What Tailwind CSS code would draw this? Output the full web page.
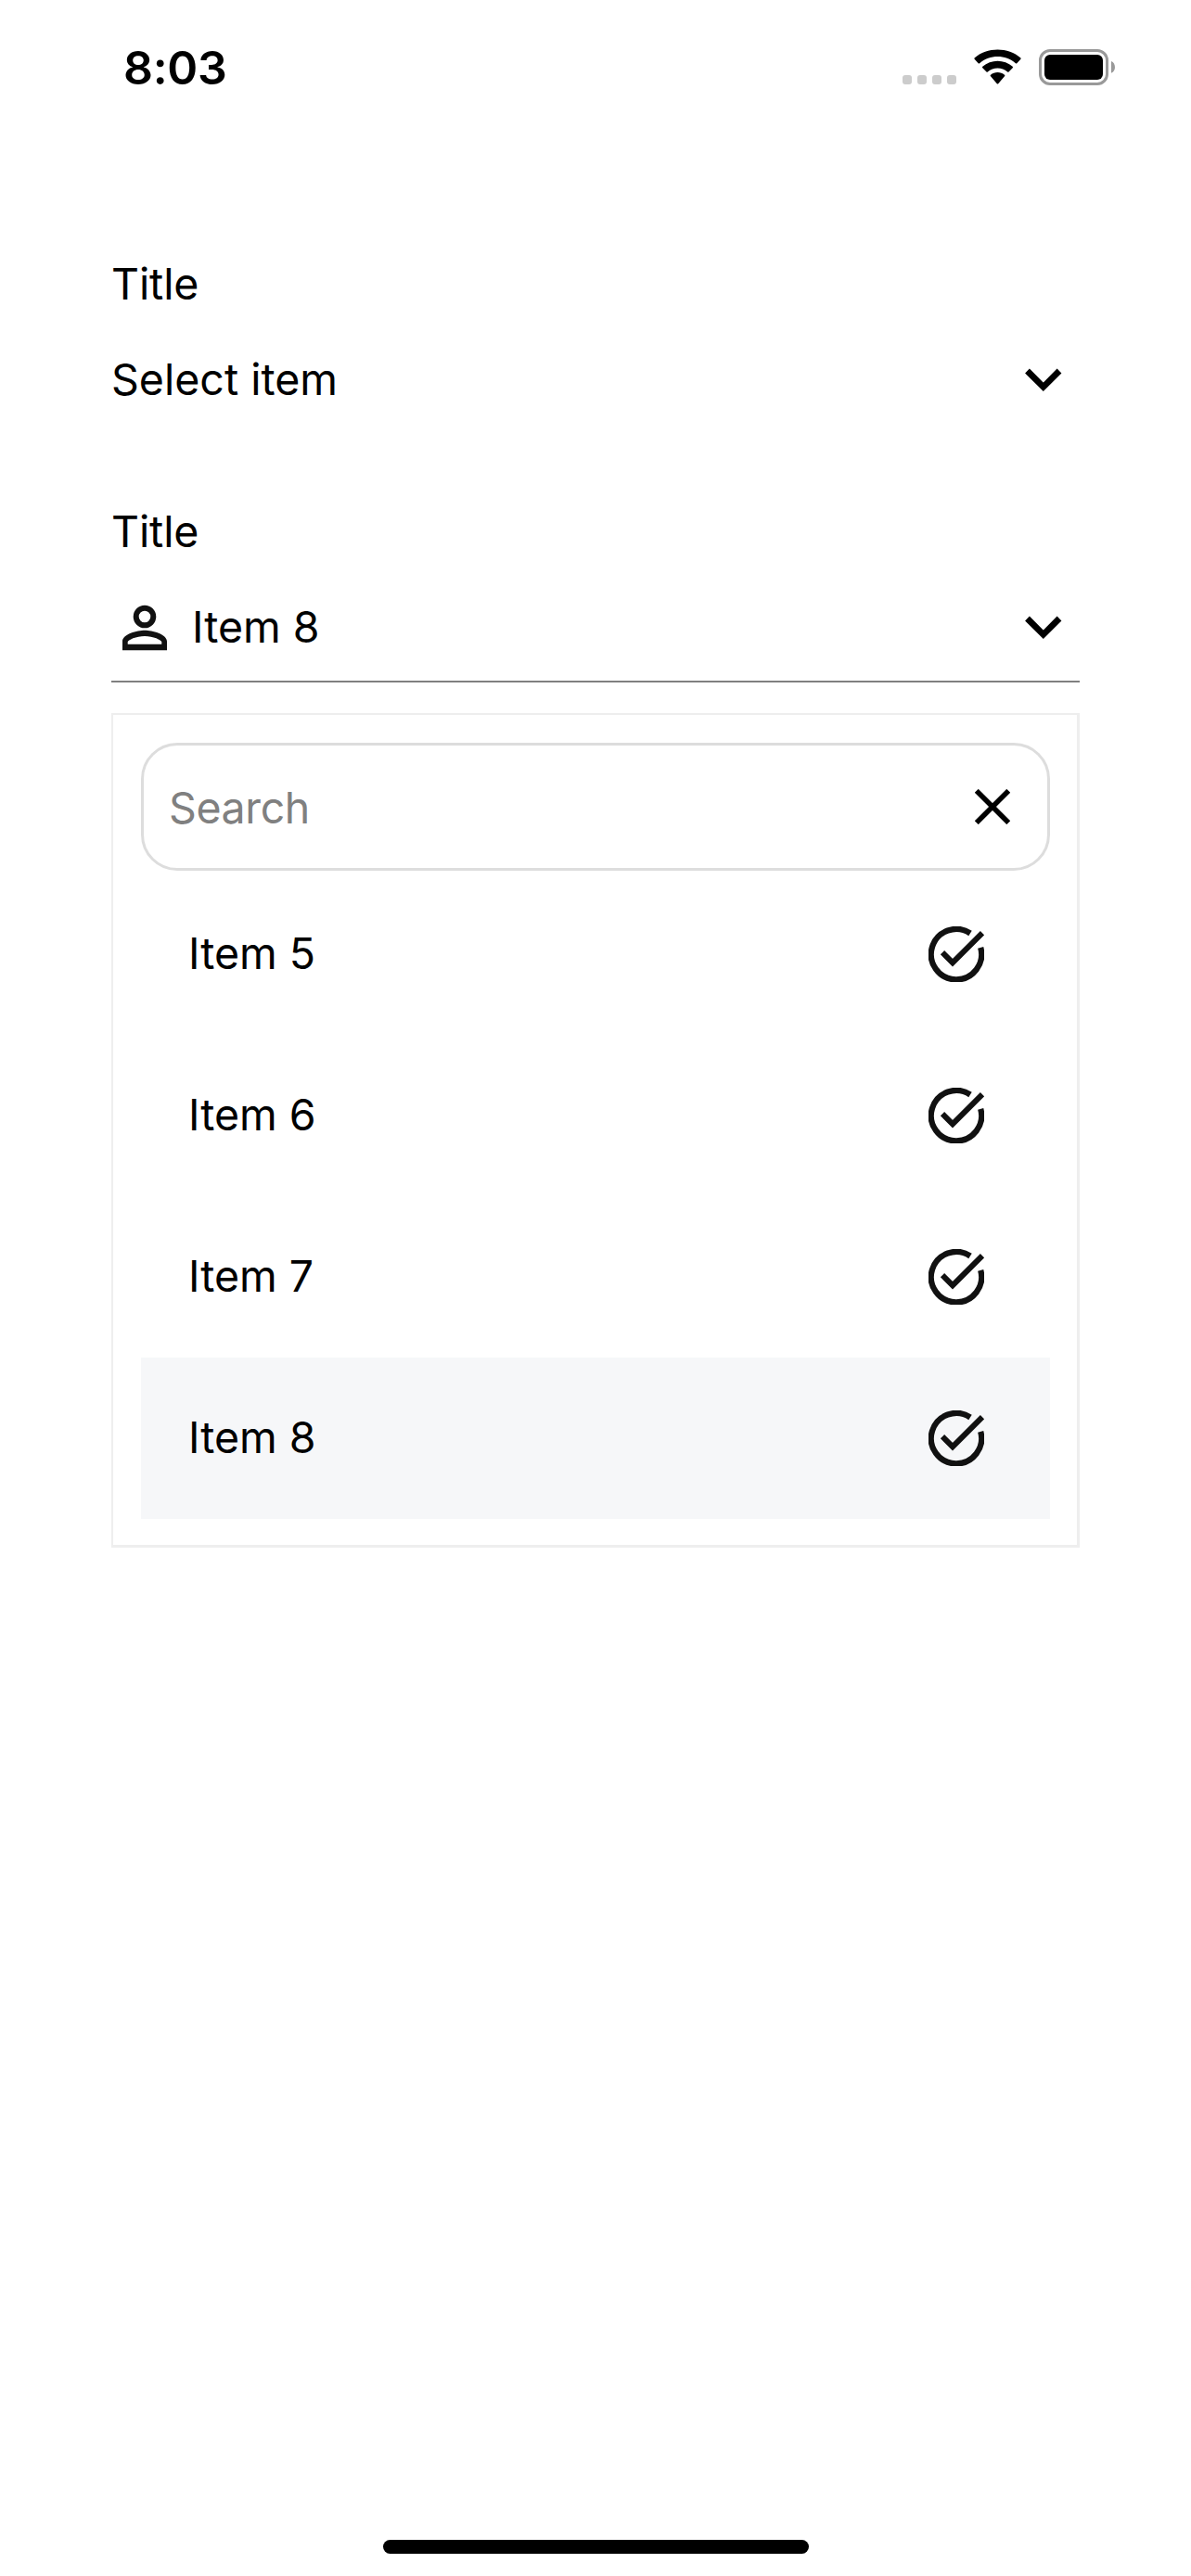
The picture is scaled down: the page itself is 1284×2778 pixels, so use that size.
<!DOCTYPE html>
<html lang="en">
<head>
<meta charset="utf-8">
<title>Dropdown</title>
<script src="https://cdn.jsdelivr.net/npm/@tailwindcss/browser@4"></script>
</head>
<body class="flex h-[2778px] w-[1284px] flex-col overflow-hidden bg-white font-['Inter',sans-serif] text-[46.5px] leading-[56px] text-black">
  <svg class="hidden">
    <symbol id="chevron" viewBox="0 0 40 26"><path d="M2.500 3 19.800 20.300 37 3" fill="none" stroke="#000" stroke-width="6.8"/></symbol>
    <symbol id="check" viewBox="0 0 60 60">
      <path d="M45 7.500A27.200 27.200 0 1 0 56.200 22.900" fill="none" stroke="#111" stroke-width="6.300"/>
      <path d="M15 28.200 26 39.200 58 7.200" fill="none" stroke="#111" stroke-width="6"/>
    </symbol>
  </svg>

  <!-- Status bar -->
  <header class="flex h-[141px] shrink-0 items-start justify-between pl-[133px] pr-[82px]">
    <div class="mt-[43px] text-[50px] leading-[60px] font-semibold tracking-[-0.3px]">8:03</div>
    <div class="mt-[53px] flex items-start">
      <div class="mt-7 flex gap-1.5">
        <i class="size-2.5 rounded-[3px] bg-[#ccc]"></i><i class="size-2.5 rounded-[3px] bg-[#ccc]"></i><i class="size-2.5 rounded-[3px] bg-[#ccc]"></i><i class="size-2.5 rounded-[3px] bg-[#ccc]"></i>
      </div>
      <svg class="mr-[19px] ml-[19px] h-[39px] w-[51px]" viewBox="0 0 51 39">
        <path d="M.6 10.8a1 1 0 0 1 0-1.2C14-2.5 37-2.5 50.4 9.6a1 1 0 0 1 0 1.2l-4.1 4.4a1 1 0 0 1-1.4 0C34 5.6 17 5.6 6.100 15.200a1 1 0 0 1-1.400 0z"/>
        <path d="M9.300 20.200a1 1 0 0 1 0-1.400c9-8.200 23.400-8.200 32.400 0a1 1 0 0 1 0 1.400l-4.200 4.200a1 1 0 0 1-1.300 0c-6-5.300-15.400-5.300-21.400 0a1 1 0 0 1-1.300 0z"/>
        <path d="M18 29.300a1 1 0 0 1 0-1.500c4.200-3.700 10.800-3.700 15 0a1 1 0 0 1 0 1.500l-6.800 7.900a1 1 0 0 1-1.400 0z"/>
      </svg>
      <svg class="h-[39px] w-[82px]" viewBox="0 0 82 39">
        <rect x="1.500" y="1.500" width="72" height="36" rx="10.500" fill="none" stroke="#999" stroke-width="3"/>
        <rect x="6" y="6" width="63" height="27" rx="6"/>
        <path d="M78 13c5.300 2 5.300 10.800 0 12.800z" fill="#999"/>
      </svg>
    </div>
  </header>

  <main class="flex grow flex-col px-[120px] pt-[137px]">
    <label class="tracking-[-0.1px]">Title</label>
    <div class="mt-[17px] flex h-[118px] items-center justify-between pr-[19px] pb-0.5">
      <span>Select item</span>
      <svg class="mt-0.5 h-[26px] w-10"><use href="#chevron"/></svg>
    </div>

    <label class="mt-[76px] tracking-[-0.1px]">Title</label>
    <div class="mt-[17px] flex h-[118px] items-center border-b-2 border-[#808080] pr-[19px]">
      <svg class="mt-0.5 size-[72px]" viewBox="0 0 24 24"><path fill="#111" d="M12 5.900a2.100 2.100 0 1 1 0 4.200 2.100 2.100 0 0 1 0-4.200m0 9.100c2.970 0 6.100 1.400 6.100 2.100v.8H5.900v-.8c0-.7 3.130-2.100 6.100-2.100M12 3.900a4.100 4.100 0 1 0 0 8.200 4.100 4.100 0 0 0 0-8.200zm0 9c-2.670 0-8 1.340-8 4v3.200h16v-3.200c0-2.660-5.330-4-8-4z"/></svg>
      <span class="ml-[15px] grow">Item 8</span>
      <svg class="mt-0.5 h-[26px] w-10"><use href="#chevron"/></svg>
    </div>

    <!-- Dropdown panel -->
    <section class="mt-[33px] flex h-[900px] flex-col border-t-2 border-r-[3px] border-b-[3px] border-l-2 border-[#eee] pt-[30px] pr-[29px] pl-[30px]">
      <div class="flex h-[138px] shrink-0 items-center justify-between rounded-[39px] border-[3px] border-[#ddd] pr-10 pl-[27px]">
        <span class="pt-0.5 tracking-[-0.4px] text-[#808080]">Search</span>
        <svg class="size-[38px]" viewBox="0 0 38 38"><path d="M1.800 1.800 36.200 36.200M36.200 1.800 1.800 36.200" stroke="#000" stroke-width="5.500"/></svg>
      </div>
      <ul class="mt-[3px]">
        <li class="flex h-[174px] items-center justify-between pr-[71px] pl-[51px]"><span class="pb-0.5">Item 5</span><svg class="size-[60px] overflow-visible"><use href="#check"/></svg></li>
        <li class="flex h-[174px] items-center justify-between pr-[71px] pl-[51px]"><span class="pb-0.5">Item 6</span><svg class="size-[60px] overflow-visible"><use href="#check"/></svg></li>
        <li class="flex h-[174px] items-center justify-between pr-[71px] pl-[51px]"><span class="pb-0.5">Item 7</span><svg class="size-[60px] overflow-visible"><use href="#check"/></svg></li>
        <li class="flex h-[174px] items-center justify-between bg-[#f6f7f9] pr-[71px] pl-[51px]"><span class="pb-0.5">Item 8</span><svg class="size-[60px] overflow-visible"><use href="#check"/></svg></li>
      </ul>
    </section>
  </main>

  <footer class="mb-6 h-[15px] w-[459px] shrink-0 self-center rounded-full bg-black"></footer>
</body>
</html>
